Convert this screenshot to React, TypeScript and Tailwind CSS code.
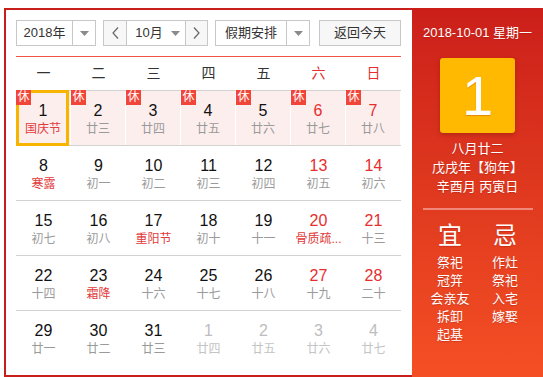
import React from "react";

type Day = { n: number; l: string; red?: boolean; fest?: boolean; other?: boolean; rest?: boolean; sel?: boolean };

const rows: Day[][] = [
  [
    { n: 1, l: "国庆节", fest: true, rest: true, sel: true },
    { n: 2, l: "廿三", rest: true },
    { n: 3, l: "廿四", rest: true },
    { n: 4, l: "廿五", rest: true },
    { n: 5, l: "廿六", rest: true },
    { n: 6, l: "廿七", rest: true, red: true },
    { n: 7, l: "廿八", rest: true, red: true },
  ],
  [
    { n: 8, l: "寒露", fest: true },
    { n: 9, l: "初一" },
    { n: 10, l: "初二" },
    { n: 11, l: "初三" },
    { n: 12, l: "初四" },
    { n: 13, l: "初五", red: true },
    { n: 14, l: "初六", red: true },
  ],
  [
    { n: 15, l: "初七" },
    { n: 16, l: "初八" },
    { n: 17, l: "重阳节", fest: true },
    { n: 18, l: "初十" },
    { n: 19, l: "十一" },
    { n: 20, l: "骨质疏...", fest: true, red: true },
    { n: 21, l: "十三", red: true },
  ],
  [
    { n: 22, l: "十四" },
    { n: 23, l: "霜降", fest: true },
    { n: 24, l: "十六" },
    { n: 25, l: "十七" },
    { n: 26, l: "十八" },
    { n: 27, l: "十九", red: true },
    { n: 28, l: "二十", red: true },
  ],
  [
    { n: 29, l: "廿一" },
    { n: 30, l: "廿二" },
    { n: 31, l: "廿三" },
    { n: 1, l: "廿四", other: true },
    { n: 2, l: "廿五", other: true },
    { n: 3, l: "廿六", other: true },
    { n: 4, l: "廿七", other: true },
  ],
];

const weekdays = ["一", "二", "三", "四", "五", "六", "日"];

function Tri() {
  return (
    <svg width="9" height="5" viewBox="0 0 9 5">
      <path d="M0 0 L9 0 L4.5 5 Z" fill="#8a8a8a" />
    </svg>
  );
}

function Chev({ dir }: { dir: "l" | "r" }) {
  return (
    <svg width="7" height="12" viewBox="0 0 7 12">
      <polyline
        points={dir === "l" ? "6,0.5 1,6 6,11.5" : "1,0.5 6,6 1,11.5"}
        fill="none"
        stroke="#666"
        strokeWidth="1.2"
      />
    </svg>
  );
}

export default function App() {
  return (
    <div
      className="w-[543px] h-[377px] bg-white overflow-hidden pt-[8px] pl-[4px] flex"
      style={{ fontFamily: '"Liberation Sans", "Noto Sans CJK SC", sans-serif' }}
    >
      {/* left frame */}
      <div className="w-[408px] h-[369px] border-l-2 border-t-2 border-b-2 border-[#c91f1c] pl-[10px] pt-[10px]">
        {/* controls */}
        <div className="flex h-[26px] w-[385px] text-[13px] text-[#333] leading-[24px]">
          <div className="w-[80px] flex border border-[#c8c8c8] bg-white">
            <div className="w-[55px] text-center">2018年</div>
            <div className="flex-1 border-l border-[#c8c8c8] flex items-center justify-center">
              <Tri />
            </div>
          </div>
          <div className="ml-[7px] w-[105px] flex border border-[#c8c8c8]">
            <div className="w-[22px] bg-[#f7f7f7] flex items-center justify-center">
              <Chev dir="l" />
            </div>
            <div className="w-[60px] border-l border-r border-[#c8c8c8] flex items-center bg-white">
              <span className="w-[44px] text-center">10月</span>
              <Tri />
            </div>
            <div className="flex-1 bg-[#f7f7f7] flex items-center justify-center">
              <Chev dir="r" />
            </div>
          </div>
          <div className="ml-[7px] w-[95px] flex border border-[#c8c8c8] bg-white">
            <div className="w-[70px] text-center">假期安排</div>
            <div className="flex-1 border-l border-[#c8c8c8] flex items-center justify-center">
              <Tri />
            </div>
          </div>
          <div className="ml-[9px] w-[82px] border border-[#c8c8c8] bg-[#f7f7f7] text-center">返回今天</div>
        </div>

        <div className="mt-[10px] w-[385px] h-px bg-[#ef5545]" />

        {/* weekday header */}
        <div className="w-[385px] grid grid-cols-7 h-[34px] border-b border-[#d2d2d2] text-[14px] leading-[33px]">
          {weekdays.map((w, i) => (
            <div key={w} className={`text-center ${i >= 5 ? "text-[#e62e2e]" : "text-[#333]"}`}>
              {w}
            </div>
          ))}
        </div>

        {/* days */}
        {rows.map((row, ri) => (
          <div
            key={ri}
            className={`w-[385px] grid grid-cols-7 h-[55px] ${ri < 4 ? "border-b border-[#d2d2d2]" : ""}`}
          >
            {row.map((d, ci) => {
              const numColor = d.other ? "text-[#bdbdbd]" : d.red ? "text-[#e62e2e]" : "text-[#111]";
              const lunColor = d.other ? "text-[#c4c4c4]" : d.fest ? "text-[#e23b3b]" : "text-[#9a9a9a]";
              return (
                <div
                  key={ci}
                  className={`relative text-center pt-[10px] ${ri === 0 ? "bg-[#fdeeee] border-r border-white" : ""}`}
                >
                  {d.sel && (
                    <div className="absolute -top-px -bottom-px left-0 right-px border-[3px] border-[#f8b500]" />
                  )}
                  {d.rest && (
                    <div className="absolute -top-px left-0 w-[15px] h-[15px] bg-[#f2453a] text-white text-[12px] leading-[15px] text-center">
                      休
                    </div>
                  )}
                  <div className={`relative text-[16px] leading-[20px] ${numColor}`}>{d.n}</div>
                  <div className={`relative text-[12px] leading-[16px] whitespace-nowrap ${lunColor}`}>{d.l}</div>
                </div>
              );
            })}
          </div>
        ))}
      </div>

      {/* right panel */}
      <div
        className="w-[131px] h-[369px] bg-linear-to-b from-[#cb1e1a] to-[#f44f24] text-white flex flex-col items-center"
        style={{ textShadow: "0 1px 1px rgba(120,0,0,0.25)" }}
      >
        <div className="mt-[16px] text-[13px] leading-[18px]">2018-10-01 星期一</div>
        <div className="mt-[16px] w-[75px] h-[75px] rounded-[3px] bg-[#ffb900] shadow-[0_2px_4px_rgba(120,20,0,0.35)] flex items-center justify-center text-[56px] leading-[75px]">
          1
        </div>
        <div className="mt-[6px] text-[13px] leading-[19px] text-center">
          <div>八月廿二</div>
          <div>戊戌年【狗年】</div>
          <div>辛酉月 丙寅日</div>
        </div>
        <div className="mt-[12px] w-[110px] h-[2px] bg-[#f0877a]" />
        <div className="mt-[12px] w-[110px] flex">
          <div className="flex-1 flex flex-col items-center">
            <div className="text-[24px] leading-[28px]">宜</div>
            <div className="mt-[4px] text-[13px] leading-[18px] text-center">
              <div>祭祀</div>
              <div>冠笄</div>
              <div>会亲友</div>
              <div>拆卸</div>
              <div>起基</div>
            </div>
          </div>
          <div className="flex-1 flex flex-col items-center">
            <div className="text-[24px] leading-[28px]">忌</div>
            <div className="mt-[4px] text-[13px] leading-[18px] text-center">
              <div>作灶</div>
              <div>祭祀</div>
              <div>入宅</div>
              <div>嫁娶</div>
            </div>
          </div>
        </div>
      </div>
    </div>
  );
}
